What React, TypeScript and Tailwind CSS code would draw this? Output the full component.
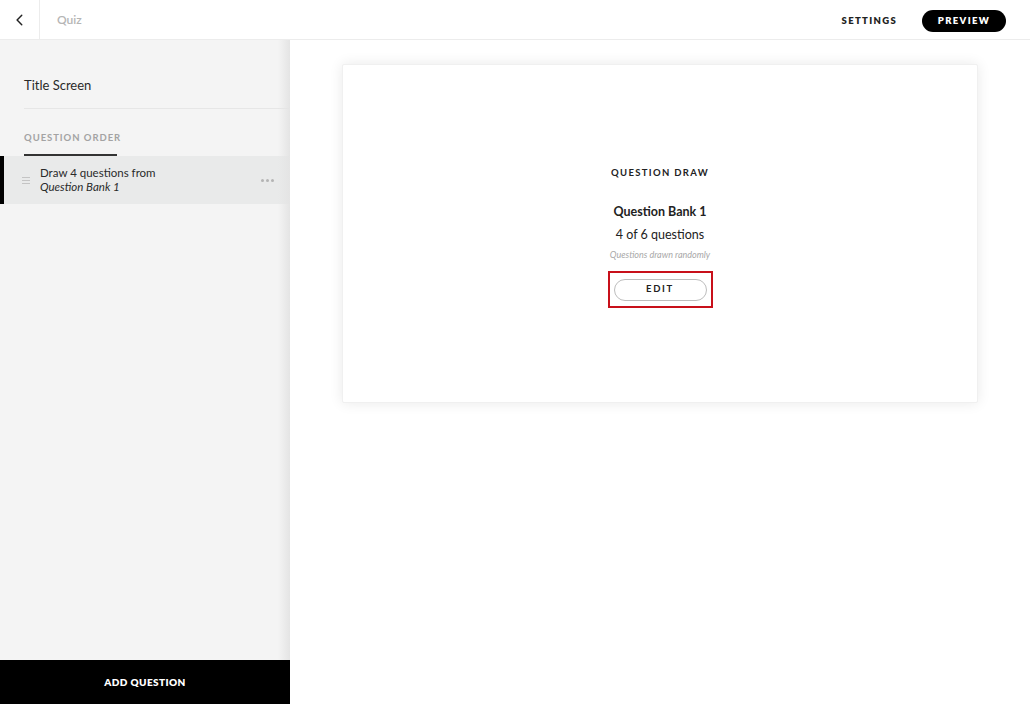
import React from "react";

function ChevronLeft() {
  return (
    <svg width="14" height="14" viewBox="0 0 24 24" fill="none" stroke="#222" strokeWidth="2.5" strokeLinecap="round" strokeLinejoin="round">
      <path d="M15 4l-8 8 8 8" />
    </svg>
  );
}

export default function App() {
  return (
    <div className="w-[1030px] h-[704px] flex flex-col bg-white overflow-hidden" style={{ fontFamily: "Lato, 'Open Sans', sans-serif" }}>
      {/* top bar */}
      <header className="h-10 shrink-0 flex items-center border-b border-[#ececec] bg-white">
        <div className="w-10 h-10 flex items-center justify-center border-r border-[#ececec]">
          <ChevronLeft />
        </div>
        <span className="ml-[17px] text-[12px] text-[#b5b5b5] font-semibold">Quiz</span>
        <div className="ml-auto flex items-center pt-[3px]">
          <span className="text-[9.5px] font-extrabold tracking-[0.14em] text-[#222]">SETTINGS</span>
          <button className="ml-[25px] mr-6 w-[84px] h-[22px] rounded-full bg-black text-white text-[9.5px] font-extrabold tracking-[0.14em]">
            PREVIEW
          </button>
        </div>
      </header>

      <div className="flex flex-1 min-h-0">
        {/* sidebar */}
        <aside className="w-[290px] shrink-0 flex flex-col bg-[#f4f4f4] relative">
          <div className="absolute right-0 top-0 bottom-0 w-3 bg-gradient-to-r from-transparent to-[#e4e4e4] pointer-events-none" />
          <div className="flex-1">
            <div className="ml-6 pt-[35px] pb-[13px] border-b border-[#e6e6e6]">
              <div className="text-[13px] leading-[20px] text-[#2a2a2a]">Title Screen</div>
            </div>
            <div className="ml-6 mt-[22px] w-[93px] pb-[9px] border-b-2 border-[#333]">
              <div className="text-[9.5px] leading-[14px] font-bold tracking-[0.1em] text-[#a3a3a3] whitespace-nowrap">QUESTION ORDER</div>
            </div>
            <div className="h-12 flex items-center bg-[#e9eaea] border-l-4 border-black">
              <div className="ml-[18px] flex flex-col gap-[2px]">
                <div className="w-2 h-px bg-[#c4c4c4]" />
                <div className="w-2 h-px bg-[#c4c4c4]" />
                <div className="w-2 h-px bg-[#c4c4c4]" />
              </div>
              <div className="ml-[10px] text-[11.5px] leading-[14px] text-[#2a2a2a]">
                <div>Draw 4 questions from</div>
                <div className="italic">Question Bank 1</div>
              </div>
              <div className="ml-auto mr-[16px] flex gap-[2px]">
                <div className="w-[3px] h-[3px] rounded-full bg-[#b4b4b4]" />
                <div className="w-[3px] h-[3px] rounded-full bg-[#b4b4b4]" />
                <div className="w-[3px] h-[3px] rounded-full bg-[#b4b4b4]" />
              </div>
            </div>
          </div>
          <button className="h-11 bg-black text-white text-[10px] font-extrabold tracking-[0.04em] relative z-10">
            ADD QUESTION
          </button>
        </aside>

        {/* main */}
        <main className="flex-1 pt-6 pl-[52px] pr-[52px]">
          <div className="h-[339px] bg-white rounded-[2px] shadow-[0_0_14px_rgba(0,0,0,0.09)] border border-[#f0f0f0] flex flex-col items-center pt-[101px]">
            <div className="text-[9.5px] leading-[14px] font-bold tracking-[0.14em] text-[#222]">QUESTION DRAW</div>
            <div className="mt-[24px] text-[12.5px] leading-[16px] font-bold text-[#222]">Question Bank 1</div>
            <div className="mt-[7px] text-[12.5px] leading-[16px] text-[#222]">4 of 6 questions</div>
            <div className="mt-[6px] text-[9px] leading-[12px] italic text-[#a8a8a8]">Questions drawn randomly</div>
            <div className="mt-[10px] w-[105px] h-[37px] border-2 border-[#c8101a] flex items-center justify-center">
              <button className="w-[93px] h-[22px] rounded-full border border-[#bdbdbd] bg-white text-[9.5px] font-bold tracking-[0.18em] text-[#222]">
                EDIT
              </button>
            </div>
          </div>
        </main>
      </div>
    </div>
  );
}
